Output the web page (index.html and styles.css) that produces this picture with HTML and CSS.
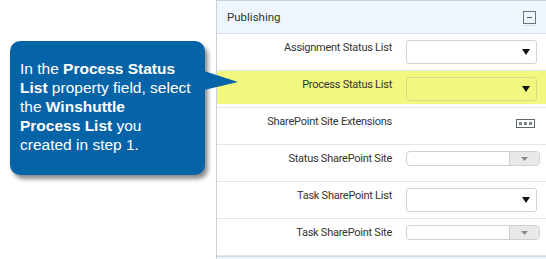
FILE: index.html
```html
<!DOCTYPE html>
<html lang="en">

<head>
    <meta charset="UTF-8">
    <meta name="viewport" content="width=device-width, initial-scale=1.0">
    <title>Publishing Properties</title>
    <link rel="stylesheet" href="styles.css">
</head>

<body>
    <div class="page">
        <div class="callout-area">
            <div class="callout">
                In the <b>Process Status</b><br>
                <b>List</b> property field, select<br>
                the <b>Winshuttle</b><br>
                <b>Process List</b> you<br>
                created in step 1.
            </div>
        </div>

        <div class="panel">
            <div class="panel-header">
                <span class="panel-title">Publishing</span>
                <span class="collapse"><span class="collapse-box"></span></span>
            </div>

            <div class="row">
                <div class="label">Assignment Status List</div>
                <div class="select">
                    <svg width="8" height="6" viewBox="0 0 8 6"><path d="M0 0h8L4 6z" fill="#111"/></svg>
                </div>
            </div>

            <div class="row highlight">
                <div class="label">Process Status List</div>
                <div class="select">
                    <svg width="8" height="6" viewBox="0 0 8 6"><path d="M0 0h8L4 6z" fill="#111"/></svg>
                </div>
            </div>

            <div class="row">
                <div class="label">SharePoint Site Extensions</div>
                <div class="control-end">
                    <span class="ellipsis"><i></i><i></i><i></i></span>
                </div>
            </div>

            <div class="row">
                <div class="label">Status SharePoint Site</div>
                <div class="combo">
                    <span class="combo-btn">
                        <svg width="7" height="4" viewBox="0 0 7 4"><path d="M0 0h7L3.5 4z" fill="#8a8a8a"/></svg>
                    </span>
                </div>
            </div>

            <div class="row">
                <div class="label">Task SharePoint List</div>
                <div class="select">
                    <svg width="8" height="6" viewBox="0 0 8 6"><path d="M0 0h8L4 6z" fill="#111"/></svg>
                </div>
            </div>

            <div class="row">
                <div class="label">Task SharePoint Site</div>
                <div class="combo">
                    <span class="combo-btn">
                        <svg width="7" height="4" viewBox="0 0 7 4"><path d="M0 0h7L3.5 4z" fill="#8a8a8a"/></svg>
                    </span>
                </div>
            </div>

            <div class="panel-next"></div>
        </div>
    </div>
</body>

</html>
```

FILE: styles.css
```css
body {
    margin: 0;
    background-color: #fff;
    font-family: Roboto, "Liberation Sans", sans-serif;
}

.page {
    display: flex;
    height: 259px;
    overflow: hidden;
}

.callout-area {
    width: 216px;
    flex: none;
    padding: 41px 0 0 10px;
    box-sizing: border-box;
}

.callout {
    position: relative;
    width: 195px;
    height: 134px;
    box-sizing: border-box;
    padding: 18px 0 0 10px;
    background-color: #0563a7;
    color: #fff;
    border-radius: 10px;
    box-shadow: 3px 4px 4px rgba(0, 0, 0, 0.45);
    font-family: "Liberation Sans", Arial, sans-serif;
    font-size: 15.5px;
    line-height: 19px;
    white-space: nowrap;
}

/* pointer towards the highlighted row */
.callout::after {
    content: "";
    position: absolute;
    left: 194px;
    top: 30px;
    width: 34px;
    height: 19px;
    background-color: #0563a7;
    clip-path: polygon(0 0, 100% 58%, 0 100%);
}

.panel {
    flex: 1;
    border-left: 1px solid #c9d1da;
    border-top: 1px solid #c9d1da;
    font-size: 11px;
    letter-spacing: -0.25px;
    color: #333;
}

.panel-header {
    height: 32px;
    display: flex;
    align-items: center;
    justify-content: space-between;
    padding: 0 10px 0 10px;
    background-color: #eef5fd;
    border-bottom: 1px solid #d8dee5;
}

.panel-title {
    margin-top: -1px;
    font-size: 11.5px;
    letter-spacing: 0;
}

.collapse {
    padding-bottom: 1px;
    border-bottom: 1px solid #dde2e8;
    margin-top: 2px;
}

.collapse-box {
    display: block;
    position: relative;
    width: 11px;
    height: 11px;
    border: 1px solid #6b7580;
}

.collapse-box::before {
    content: "";
    position: absolute;
    left: 3px;
    top: 5px;
    width: 5px;
    height: 1px;
    background-color: #555;
}

.row {
    height: 36px;
    display: grid;
    grid-template-columns: 175px 1fr;
    column-gap: 14px;
    align-items: start;
    border-bottom: 1px solid #e3e6ea;
}

.row.highlight {
    background: linear-gradient(#f1f77f, #f1f77f) top / 100% 33px no-repeat;
}

.label {
    text-align: right;
    line-height: 14px;
    padding-top: 7px;
    white-space: nowrap;
}

.select {
    margin-top: 6px;
    width: 131px;
    height: 24px;
    box-sizing: border-box;
    border: 1px solid #d3d3d3;
    border-radius: 3px;
    display: flex;
    align-items: center;
    justify-content: flex-end;
    padding-right: 6px;
}

.highlight .select {
    border-color: #d6db8a;
}

.control-end {
    width: 129px;
    display: flex;
    justify-content: flex-end;
    padding-top: 11px;
}

.ellipsis {
    display: flex;
    gap: 2px;
    align-items: center;
    justify-content: center;
    width: 19px;
    height: 9px;
    box-sizing: border-box;
    border: 1px solid #5d6772;
}

.ellipsis i {
    display: block;
    width: 3px;
    height: 3px;
    background-color: #7a838c;
}

.combo {
    margin-top: 6px;
    width: 134px;
    height: 15px;
    box-sizing: border-box;
    border: 1px solid #d0d0d0;
    border-radius: 4px;
    display: flex;
    justify-content: flex-end;
    overflow: hidden;
}

.combo-btn {
    width: 29px;
    background-color: #e8e8e8;
    border-left: 1px solid #d0d0d0;
    display: flex;
    align-items: center;
    justify-content: center;
}

.panel-next {
    height: 10px;
    background-color: #eef5fd;
    border-top: 1px solid #d0d8e0;
}
```
